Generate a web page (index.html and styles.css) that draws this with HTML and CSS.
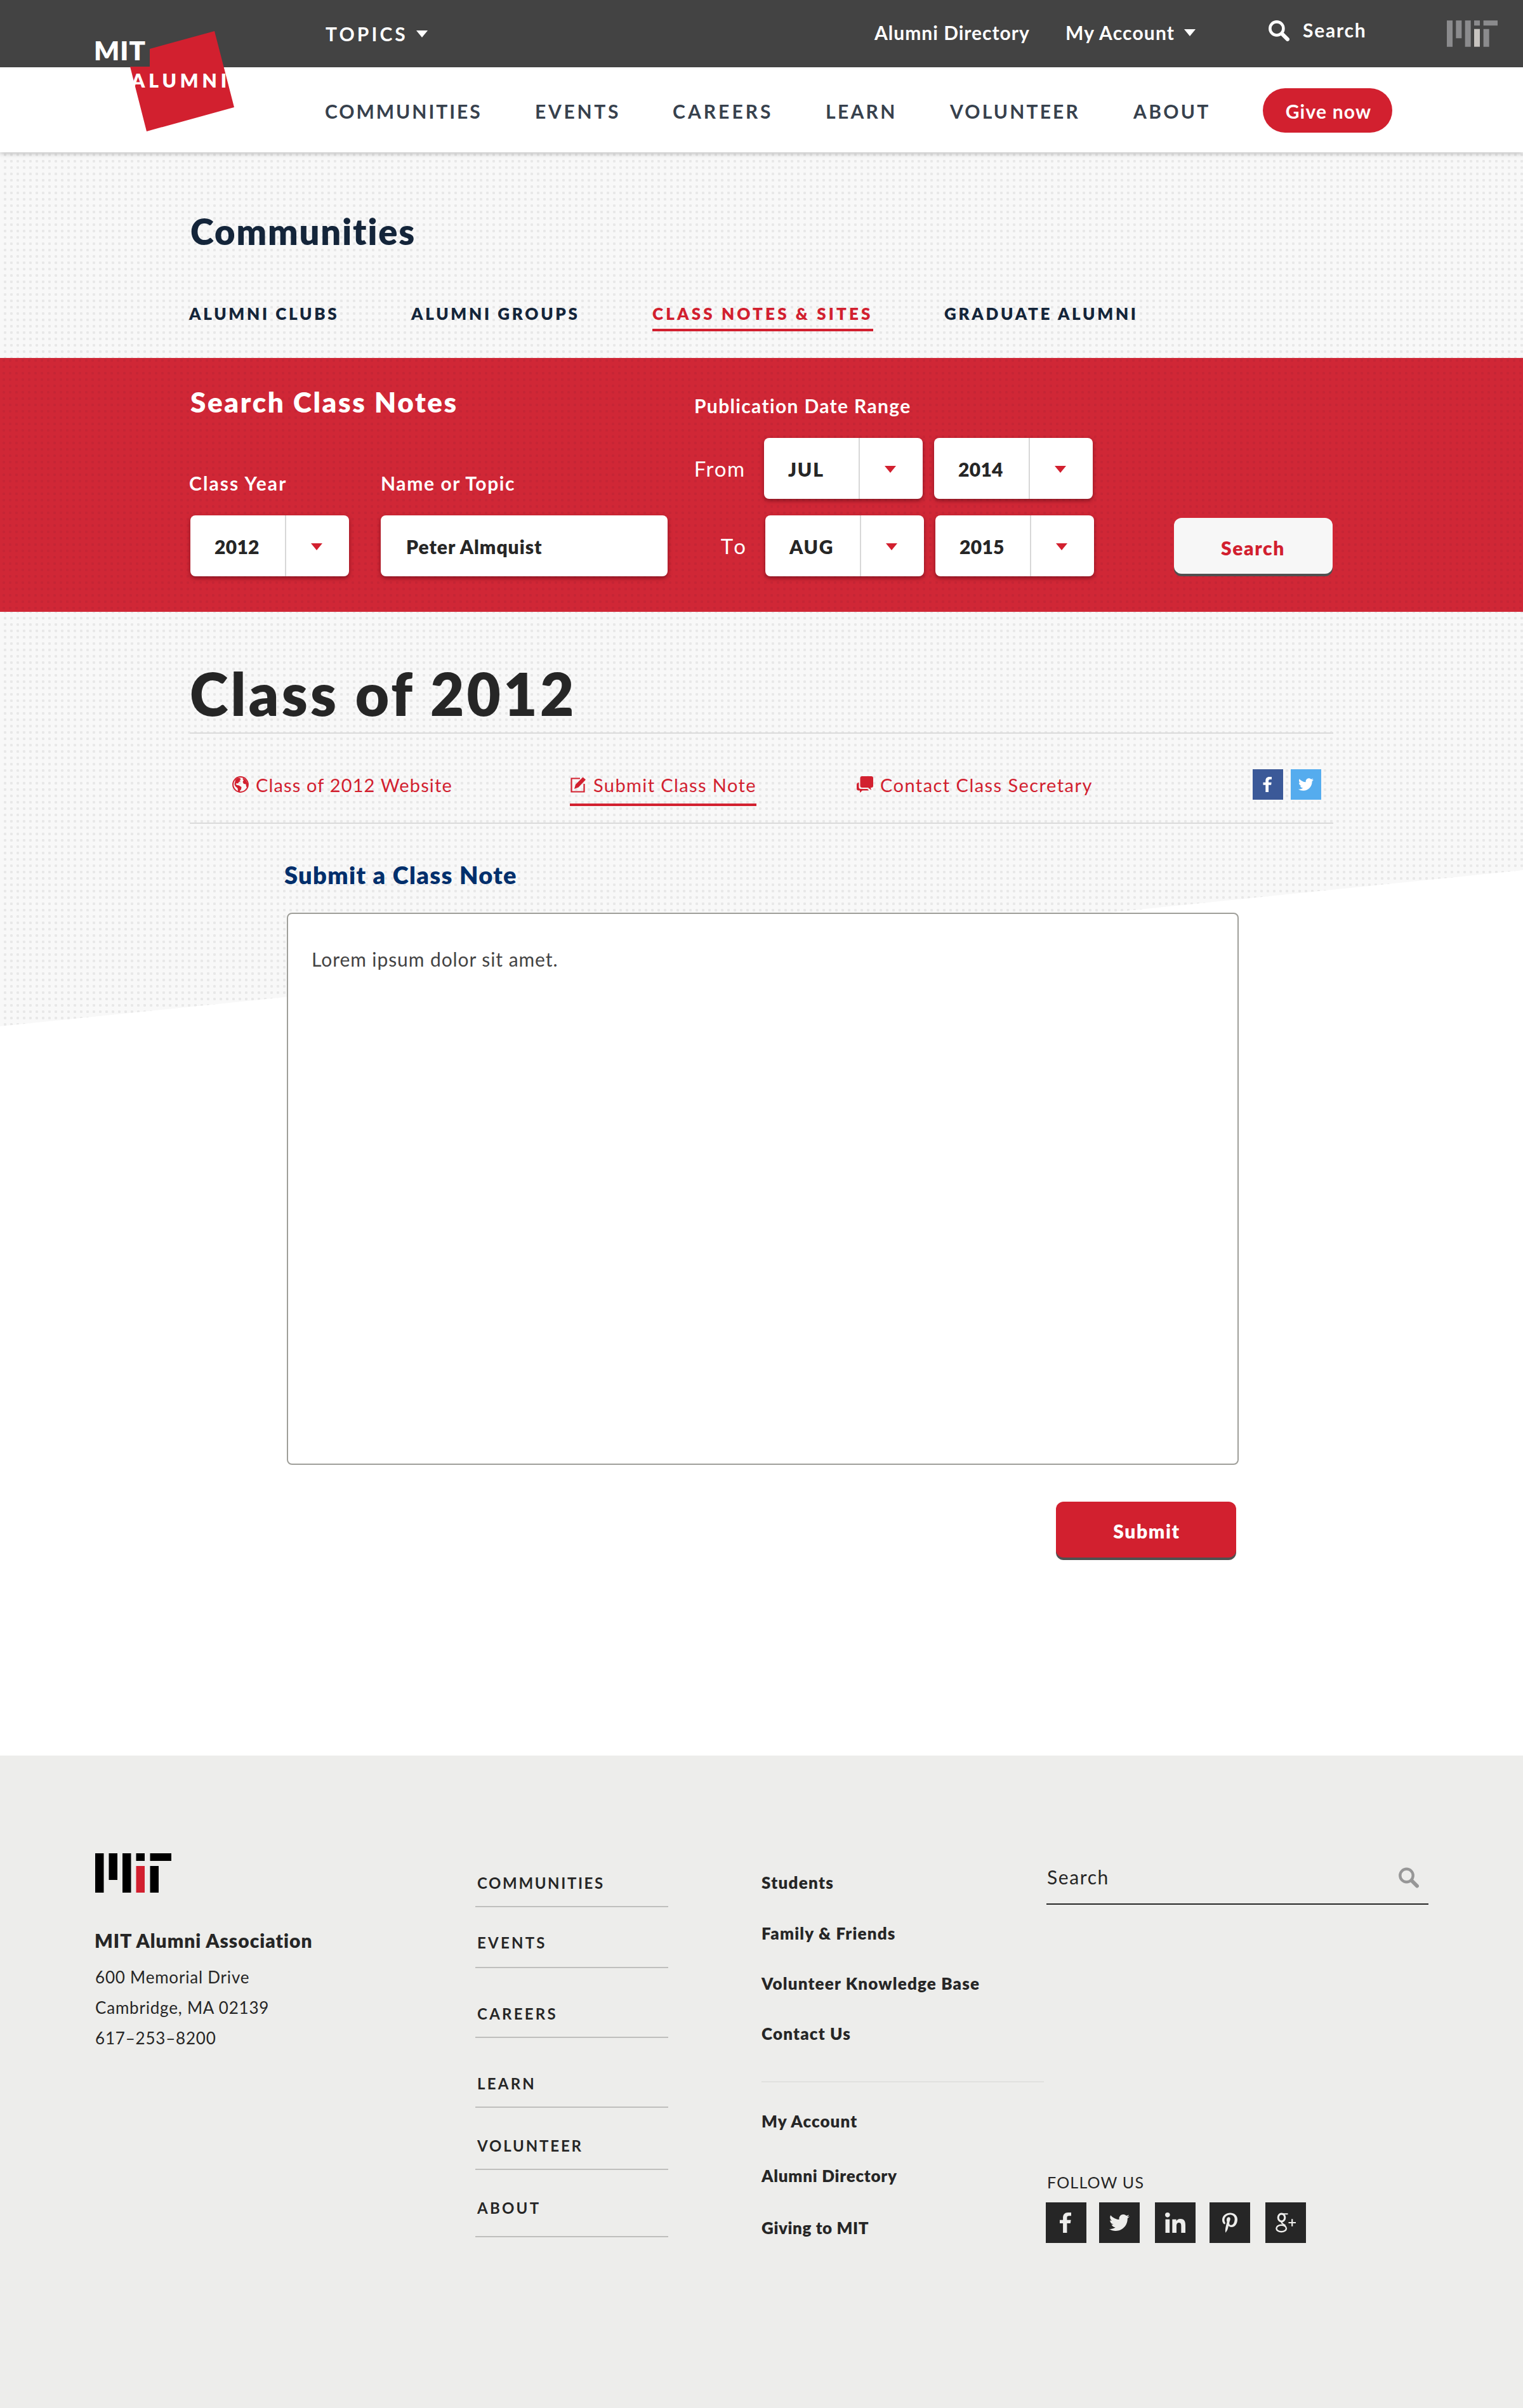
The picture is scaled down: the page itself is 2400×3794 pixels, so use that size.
FILE: index.html
```html
<!DOCTYPE html>
<html lang="en">
<head>
<meta charset="utf-8">
<title>Submit a Class Note – MIT Alumni</title>
<link rel="stylesheet" href="styles.css">
</head>
<body>
<svg class="defs" aria-hidden="true">
  <symbol id="mit" viewBox="0 0 120 62"><path d="M0 0h13.500v62H0zM21.500 0H35v42H21.500zM43 0h13.500v62H43zM64.500 0H78v12H64.500zM86.500 20H100v42H86.500zM86.500 0H120v12H86.500z"/><path class="mit-i" d="M64.500 20H78v42H64.500z"/></symbol>
  <symbol id="magnifier" viewBox="0 0 32 32"><circle cx="12.500" cy="12.500" r="10.200" fill="none" stroke="currentColor" stroke-width="4.400"/><path d="M20.500 20.500L29 29" stroke="currentColor" stroke-width="6" stroke-linecap="round"/></symbol>
  <symbol id="facebook" viewBox="0 0 32 32"><path d="M24 0v5.300h-3c-3 0-3.600 1.200-3.600 3.200v3.300h6.200L22.800 17h-5.400v15h-6.300V17H6v-5.200h5.100V8c0-5 3-8 7.800-8z"/></symbol>
  <symbol id="twitter" viewBox="0 0 24 24"><path d="M23.954 4.569c-.885.389-1.830.654-2.825.775 1.014-.611 1.794-1.574 2.163-2.723-.951.555-2.005.959-3.127 1.184-.896-.959-2.173-1.559-3.591-1.559-2.717 0-4.920 2.203-4.920 4.917 0 .39.045.765.127 1.124C7.691 8.094 4.066 6.130 1.640 3.161c-.427.722-.666 1.561-.666 2.475 0 1.710.87 3.213 2.188 4.096-.807-.026-1.566-.248-2.228-.616v.061c0 2.385 1.693 4.374 3.946 4.827-.413.111-.849.171-1.296.171-.314 0-.615-.03-.916-.086.631 1.953 2.445 3.377 4.604 3.417-1.680 1.319-3.809 2.105-6.102 2.105-.39 0-.779-.023-1.170-.067 2.189 1.394 4.768 2.209 7.557 2.209 9.054 0 13.999-7.496 13.999-13.986 0-.209 0-.42-.015-.63.961-.689 1.800-1.560 2.460-2.548z"/></symbol>
</svg>

<header class="header">
  <div class="topbar">
    <a class="topics"><span>TOPICS</span><i class="caret"></i></a>
    <a class="directory">Alumni Directory</a>
    <a class="account"><span>My Account</span><i class="caret"></i></a>
    <a class="top-search"><svg><use href="#magnifier"/></svg><span>Search</span></a>
    <svg class="mit-top"><use href="#mit"/></svg>
  </div>
  <nav class="nav">
    <a>COMMUNITIES</a>
    <a>EVENTS</a>
    <a>CAREERS</a>
    <a>LEARN</a>
    <a>VOLUNTEER</a>
    <a>ABOUT</a>
    <a class="give">Give now</a>
  </nav>
  <a class="logo">
    <svg viewBox="0 0 240 220"><path fill="#d2202f" d="M188 0L86 28v28H55l26 102 138-38z"/></svg>
    <b class="logo-mit">MIT</b>
    <b class="logo-alumni">ALUMNI</b>
  </a>
</header>

<main class="content">
  <section class="section-head">
    <h2>Communities</h2>
    <nav class="subnav">
      <a>ALUMNI CLUBS</a>
      <a>ALUMNI GROUPS</a>
      <a class="active">CLASS NOTES &amp; SITES</a>
      <a>GRADUATE ALUMNI</a>
    </nav>
  </section>

  <section class="search-band">
    <div class="who">
      <h3>Search Class Notes</h3>
      <div class="fields">
        <label><span class="label label-year">Class Year</span>
          <span class="select"><span class="val">2012</span><span class="arrow"><i class="caret"></i></span></span></label>
        <label><span class="label label-name">Name or Topic</span>
          <span class="field">Peter Almquist</span></label>
      </div>
    </div>
    <div class="dates">
      <span class="label label-range">Publication Date Range</span>
      <div class="date-row">
        <span class="edge">From</span>
        <span class="select month"><span class="val">JUL</span><span class="arrow"><i class="caret"></i></span></span>
        <span class="select"><span class="val">2014</span><span class="arrow"><i class="caret"></i></span></span>
      </div>
      <div class="date-row to">
        <span class="edge">To</span>
        <span class="select month"><span class="val">AUG</span><span class="arrow"><i class="caret"></i></span></span>
        <span class="select"><span class="val">2015</span><span class="arrow"><i class="caret"></i></span></span>
      </div>
    </div>
    <button class="btn btn-search" type="button">Search</button>
  </section>

  <section class="class-page">
    <h1>Class of 2012</h1>
    <div class="actions">
      <a class="act"><svg viewBox="0 0 26 26"><circle cx="13" cy="13" r="11.900" fill="none" stroke="currentColor" stroke-width="2"/><path d="M5 5.500L8.500 2.500l4 .5 1 2.500-2 .5 1.500 2-2.500 1-1.500 2.500-2-.5-1.500 1.500 2 1.500 3 .5 4 2.500-.5 3.500-2 2.500-.5 3.500-2.500-2.500-.5-5-3.500-3-1.500-3zM17 2.500l4.500 3.500 3 6-1 6.500-1.500-2.500-.5-3.500-3.500-.5-1.500-3 1.500-3-1.500-1z"/></svg><span>Class of 2012 Website</span></a>
      <a class="act current"><svg viewBox="0 0 26 26"><path d="M16 3.500H2.500v21h20V12" fill="none" stroke="currentColor" stroke-width="2.200"/><path d="M7 20l2-7L20.500 1.500l4.500 4L13.500 17.500z"/></svg><span>Submit Class Note</span></a>
      <a class="act"><svg viewBox="0 0 26 26"><path d="M8.500 0H23a3 3 0 0 1 3 3v12a3 3 0 0 1-3 3h-1l1 4-5-4H8.500a3 3 0 0 1-3-3V3a3 3 0 0 1 3-3z"/><path d="M3.500 10v7a3 3 0 0 0 3 3H17l2 2.500H9L5 26v-3.500H3a3 3 0 0 1-3-3V13a3 3 0 0 1 3.500-3z"/></svg><span>Contact Class Secretary</span></a>
      <div class="share">
        <a class="sq fb"><svg><use href="#facebook"/></svg></a>
        <a class="sq tw"><svg><use href="#twitter"/></svg></a>
      </div>
    </div>
    <form class="note-form">
      <h4>Submit a Class Note</h4>
      <div class="note">Lorem ipsum dolor sit amet.</div>
      <button class="btn btn-submit" type="button">Submit</button>
    </form>
  </section>
</main>

<footer class="footer">
  <div class="org">
    <svg class="mit-foot"><use href="#mit"/></svg>
    <b class="org-name">MIT Alumni Association</b>
    <address><span>600 Memorial Drive</span><span>Cambridge, MA 02139</span><span>617–253–8200</span></address>
  </div>
  <ul class="foot-nav">
    <li><a>COMMUNITIES</a></li>
    <li><a>EVENTS</a></li>
    <li><a>CAREERS</a></li>
    <li><a>LEARN</a></li>
    <li><a>VOLUNTEER</a></li>
    <li><a>ABOUT</a></li>
  </ul>
  <ul class="foot-links">
    <li><a>Students</a></li>
    <li><a>Family &amp; Friends</a></li>
    <li><a>Volunteer Knowledge Base</a></li>
    <li><a>Contact Us</a></li>
    <li class="rule"></li>
    <li><a>My Account</a></li>
    <li><a>Alumni Directory</a></li>
    <li><a>Giving to MIT</a></li>
  </ul>
  <div class="foot-side">
    <div class="foot-search"><span>Search</span><svg><use href="#magnifier"/></svg></div>
    <div class="follow">
      <span>FOLLOW US</span>
      <div class="social">
        <a><svg><use href="#facebook"/></svg></a>
        <a><svg><use href="#twitter"/></svg></a>
        <a><svg viewBox="0 0 448 448"><path d="M100.280 448H7.400V148.900h92.880zM53.790 108.100C24.090 108.100 0 83.500 0 53.800a53.790 53.790 0 0 1 107.580 0c0 29.700-24.100 54.300-53.790 54.300zM447.900 448h-92.680V302.400c0-34.700-.7-79.200-48.290-79.200-48.290 0-55.690 37.700-55.690 76.700V448h-92.780V148.900h89.080v40.800h1.300c12.400-23.500 42.690-48.300 87.880-48.300 94 0 111.280 61.900 111.280 142.300V448z"/></svg></a>
        <a><svg viewBox="0 0 384 512"><path d="M204 6.500C101.400 6.500 0 74.900 0 185.600 0 256 39.600 296 63.600 296c9.900 0 15.600-27.600 15.600-35.400 0-9.300-23.700-29.100-23.700-67.800 0-80.400 61.200-137.400 140.400-137.400 68.100 0 118.500 38.700 118.500 109.800 0 53.100-21.300 152.700-90.300 152.700-24.900 0-46.200-18-46.200-43.800 0-37.800 26.400-74.400 26.400-113.400 0-66.200-93.900-54.200-93.900 25.800 0 16.800 2.100 35.400 9.600 50.700-13.800 59.400-42 147.900-42 209.100 0 18.900 2.700 37.500 4.500 56.400 3.400 3.800 1.700 3.400 6.900 1.300 50.400-69 48.600-82.500 71.400-172.800 12.300 23.400 44.100 36 69.300 36 106.200 0 153.900-103.500 153.900-196.800C384 71.300 298.200 6.500 204 6.500z"/></svg></a>
        <a><svg class="gplus" viewBox="0 0 32 32"><ellipse cx="9.500" cy="8" rx="5.300" ry="6" stroke-width="3"/><path d="M9 2.200h10.500M11 14c-4 2 1 4 4.500 6.500" stroke-width="2"/><ellipse cx="9.200" cy="25" rx="7.800" ry="5.300" stroke-width="2.400"/><path d="M20.500 16H32M26.200 10.200v11.600" stroke-width="2.200"/></svg></a>
      </div>
    </div>
  </div>
</footer>
</body>
</html>
```
FILE: styles.css
```css
* { box-sizing: border-box; margin: 0; padding: 0; }
body { width: 2400px; font: 30px/30px Lato, "Open Sans", sans-serif; color: #262626; background: #fff; }
ul { list-style: none; }
a { color: inherit; text-decoration: none; white-space: nowrap; }
span, b, h1, h2, h3, h4 { white-space: nowrap; }
svg { display: block; fill: currentColor; }
.defs { position: absolute; width: 0; height: 0; }
.caret { display: inline-block; border: 9px solid transparent; border-top: 11px solid currentColor; border-bottom: 0; }

/* Header */
.header { position: relative; z-index: 2; height: 240px; background: #fff; box-shadow: 0 1px 8px rgba(0,0,0,.3); }
.topbar { display: grid; grid-template-columns: 865px 301px 320px 281px auto; align-items: start; height: 106px; padding-left: 513px; background: #434343; color: #fff; font-weight: 700; }
.topics, .account { display: flex; align-items: center; }
.topics { gap: 13px; padding-top: 38px; letter-spacing: 4.100px; }
.account { gap: 15px; letter-spacing: 1.200px; }
.directory, .account { padding-top: 36px; }
.directory { letter-spacing: 1px; }
.top-search { display: flex; align-items: flex-start; gap: 21px; padding-top: 32px; letter-spacing: 1.800px; }
.top-search svg { width: 33px; height: 33px; }
.mit-top { width: 80px; height: 42px; margin-top: 32px; color: #8b8b8d; --i: #c8c4c0; }
.mit-i { fill: var(--i); }
.nav { display: grid; grid-template-columns: 331px 217px 241px 195px 289px 204px 204px; align-items: center; height: 134px; padding: 3px 0 0 513px; color: #37414d; font-weight: 700; letter-spacing: 3.300px; }
.nav a:nth-child(1) { margin-left: -1px; letter-spacing: 2.950px; }
.nav a:nth-child(2) { margin-left: -1px; letter-spacing: 3.700px; }
.nav a:nth-child(3) { margin-left: -1px; letter-spacing: 4.050px; }
.nav a:nth-child(4) { margin-left: -1px; }
.nav a:nth-child(5) { letter-spacing: 3.150px; }
.nav .give { display: flex; align-items: center; justify-content: center; height: 70px; margin-top: -1px; padding: 1px 0 0 3px; border-radius: 35px; background: #d2202f; color: #fff; letter-spacing: 1.200px; }
.logo { position: absolute; left: 150px; top: 49px; width: 240px; height: 160px; color: #fff; }
.logo svg { width: 240px; height: 220px; }
.logo-mit, .logo-alumni { position: absolute; font-weight: 800; }
.logo-mit { left: -2px; top: 9px; font-size: 42px; line-height: 42px; letter-spacing: 1px; }
.logo-alumni { left: 57px; top: 62px; letter-spacing: 5.900px; }

/* Section heading */
.content { position: relative; z-index: 1; height: 2526px; }
.content::before { content: ""; position: absolute; z-index: -1; inset: 0 0 auto; height: 1377px; background: radial-gradient(circle at 8px 4px, #e8e8e8 1.900px, transparent 2.500px) 0 0 / 10px 10px #f8f8f8; clip-path: polygon(0 0, 100% 0, 100% 1131px, 0 1377px); }
.section-head { height: 324px; padding: 97px 0 0 300px; color: #14253a; }
.section-head h2 { font-size: 56px; line-height: 56px; font-weight: 800; letter-spacing: 1.900px; }
.subnav { display: grid; grid-template-columns: 350px 380px 460px auto; align-items: start; margin-top: 88px; font-size: 26px; line-height: 26px; font-weight: 800; letter-spacing: 3.700px; }
.subnav a { margin-left: -2px; }
.subnav .active { justify-self: start; width: 348px; padding-bottom: 11px; border-bottom: 4px solid #d2202f; color: #d2202f; letter-spacing: 4.150px; }

/* Search band */
.search-band { display: grid; grid-template-columns: 795px 755px 250px; height: 400px; padding-left: 300px; color: #fff; background: radial-gradient(circle at 6px 4px, #c62535 1.900px, transparent 2.500px) 0 0 / 10px 10px #d02736; }
.who { padding-top: 47px; }
.who h3 { font-size: 44px; line-height: 44px; font-weight: 800; letter-spacing: 2.600px; }
.fields { display: grid; grid-template-columns: 300px 452px; margin-top: 91px; }
.label { display: block; font-weight: 700; }
.label-year { margin-left: -2px; letter-spacing: 2.100px; }
.label-name { letter-spacing: 1.600px; }
.label-range { margin-left: -1px; letter-spacing: 1.350px; }
.select, .field { display: flex; height: 96px; border-radius: 8px; background: #fff; color: #262626; font-weight: 800; box-shadow: 0 3px 6px rgba(90,10,20,.6); }
.select { width: 250px; }
.fields .select, .fields .field { margin-top: 36px; }
.val { display: flex; align-items: center; width: 151px; padding: 1px 0 0 38px; border-right: 2px solid #d8d8d8; letter-spacing: .3px; }
.month .val { letter-spacing: 1.800px; }
.arrow { display: flex; align-items: center; justify-content: center; width: 96px; padding-top: 2px; color: #d2202f; }
.field { align-items: center; padding: 1px 0 0 40px; letter-spacing: 1px; }
.dates { padding-top: 60px; }
.date-row { display: grid; grid-template-columns: 91px 250px 250px; column-gap: 18px; margin-top: 36px; }
.date-row.to { margin-top: 26px; padding-left: 2px; }
.edge { display: flex; align-items: center; justify-content: flex-end; padding: 1px 11px 0 0; font-size: 33px; line-height: 33px; letter-spacing: 1.730px; }
.to .edge { letter-spacing: 5px; padding-right: 8px; }
.btn { height: 88px; padding: 4px 0 0 2px; border: 0; border-radius: 12px; font: 800 30px/30px Lato, "Open Sans", sans-serif; letter-spacing: 1.600px; box-shadow: 0 4px 0 #505050; }
.btn-search { margin-top: 252px; padding: 5px 1px 0 0; background: #f7f7f7; color: #d2202f; }

/* Class page */
.class-page { padding: 83px 299px 0; }
.class-page h1 { height: 109px; border-bottom: 2px solid #dadada; font-size: 92px; line-height: 92px; font-weight: 800; letter-spacing: 4.300px; }
.actions { display: grid; grid-template-columns: 532px 452px 624px auto; align-items: start; height: 142px; padding: 66px 0 0 67px; border-bottom: 2px solid #dadada; color: #d2202f; font-size: 29px; line-height: 30px; }
.act { display: flex; justify-self: start; gap: 11px; letter-spacing: 1.150px; }
.act:nth-child(3) { letter-spacing: 1.450px; }
.act svg { width: 26px; height: 26px; margin-top: 1px; }
.act.current { width: 294px; padding-bottom: 14px; border-bottom: 4px solid #d2202f; letter-spacing: 1.400px; }
.share { display: flex; gap: 12px; margin-top: -10px; color: #fff; }
.sq { display: grid; place-items: center; width: 48px; height: 48px; }
.sq svg { width: 24px; height: 24px; }
.fb { background: #3b5998; }
.tw { background: #55acee; }
.note-form { width: 1500px; margin-left: 153px; padding-top: 61px; }
.note-form h4 { margin-left: -4px; font-size: 38px; line-height: 38px; font-weight: 800; letter-spacing: 1.350px; color: #002f6c; }
.note { height: 870px; margin-top: 41px; padding: 56px 37px; border: 2px solid #9f9f9a; border-radius: 8px; background: #fff; color: #434343; letter-spacing: .92px; }
.btn-submit { display: block; width: 284px; margin: 58px 4px 0 auto; background: #d2202f; color: #fff; }

/* Footer */
.footer { display: grid; grid-template-columns: 599px 451px 449px 602px; height: 1028px; padding-left: 150px; background: #ededeb; }
.org { padding-top: 154px; }
.mit-foot { width: 120px; height: 62px; color: #000; --i: #d2202f; }
.org-name { display: block; margin: 60px 0 0 -1px; font-weight: 800; letter-spacing: 1px; }
.org address { display: flex; flex-direction: column; align-items: flex-start; margin-top: 19px; font: 26px/48px Lato, sans-serif; letter-spacing: .8px; }
.foot-nav { width: 304px; padding-top: 189px; font-size: 24px; line-height: 24px; font-weight: 700; }
.foot-nav li { display: flex; padding: 0 0 24px 3px; border-bottom: 2px solid #bfbfbd; letter-spacing: 3.250px; }
.foot-nav li:nth-child(1) { letter-spacing: 2.600px; }
.foot-nav li:nth-child(2) { margin-top: 44px; padding-bottom: 26px; }
.foot-nav li:nth-child(3), .foot-nav li:nth-child(4) { margin-top: 60px; }
.foot-nav li:nth-child(5), .foot-nav li:nth-child(6) { margin-top: 48px; }
.foot-nav li:nth-child(5) { letter-spacing: 2.850px; }
.foot-nav li:nth-child(6) { padding-bottom: 32px; }
.foot-links { width: 445px; padding-top: 187px; font-size: 26px; line-height: 26px; font-weight: 800; }
.foot-links li { display: flex; margin-bottom: 53px; letter-spacing: 1.180px; }
.foot-links li:nth-child(1) { margin-bottom: 54px; letter-spacing: 1.300px; }
.foot-links li:nth-child(4) { margin-bottom: 62px; }
.foot-links .rule { height: 2px; margin-bottom: 48px; background: #e1e1df; }
.foot-links li:nth-child(6) { margin-bottom: 60px; letter-spacing: 1.050px; }
.foot-links li:nth-child(7) { margin-bottom: 56px; letter-spacing: .75px; }
.foot-links li:nth-child(8) { letter-spacing: .6px; }
.foot-side { padding-top: 176px; }
.foot-search { display: flex; justify-content: space-between; height: 59px; padding: 0 15px 0 1px; border-bottom: 2px solid #262626; letter-spacing: 1.600px; }
.foot-search svg { width: 32px; height: 33px; color: #979797; }
.follow { margin-top: 425px; font-size: 25px; line-height: 25px; letter-spacing: 1.190px; }
.follow > span { margin-left: 1px; }
.social { display: grid; grid-template-columns: 84px 88px 86px 88px 64px; margin: 19px 0 0 -1px; }
.social a { display: grid; place-items: center; width: 64px; height: 64px; background: #262626; color: #ededeb; }
.social svg { width: 32px; height: 32px; }
.social .gplus { fill: none; stroke: currentColor; }
```
